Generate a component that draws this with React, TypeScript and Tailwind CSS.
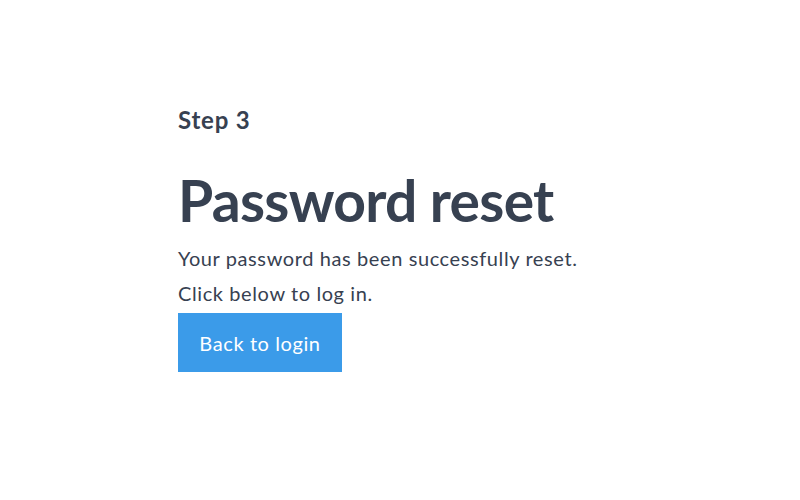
export default function App() {
  return (
    <div className="w-[800px] h-[500px] bg-white font-['Lato','Liberation_Sans',sans-serif] text-[#374151]">
      <div className="pl-[178px] pt-[104px]">
        <h2 className="text-[24px] font-bold leading-[32px] tracking-[0.8px]">Step 3</h2>
        <h1 className="mt-[30px] text-[57px] font-bold leading-[68px] tracking-[-0.7px]">
          Password reset
        </h1>
        <p className="mt-[7px] text-[20px] leading-[35px] tracking-[0.6px]">
          Your password has been successfully reset.
          <br />
          Click below to log in.
        </p>
        <button
          type="button"
          className="mt-[2px] w-[164px] h-[59px] bg-[#3b9be9] text-white text-[20px] tracking-[0.6px]"
        >
          Back to login
        </button>
      </div>
    </div>
  )
}
